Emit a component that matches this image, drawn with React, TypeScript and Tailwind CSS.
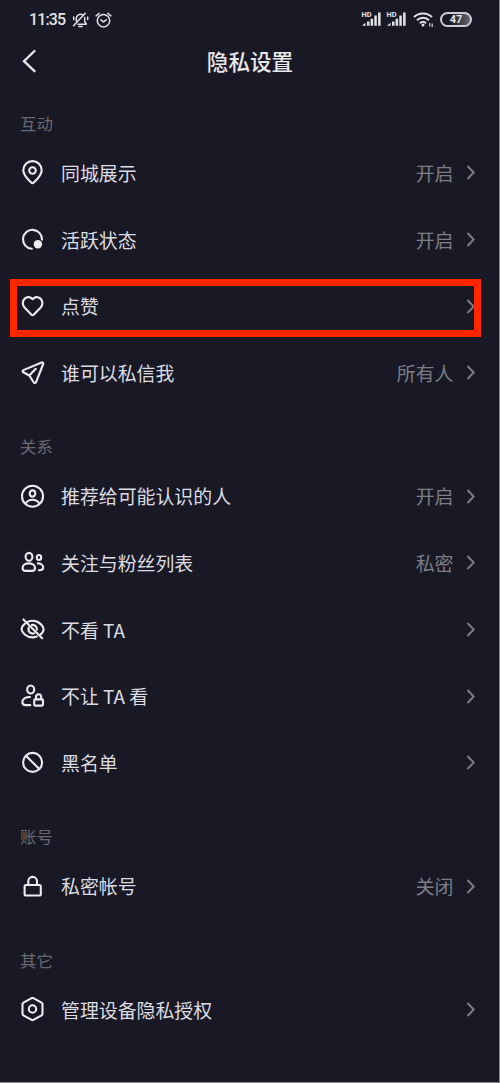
import React from 'react'

type IconName =
  | 'pin'
  | 'active'
  | 'heart'
  | 'send'
  | 'profile'
  | 'users'
  | 'eyeOff'
  | 'userLock'
  | 'ban'
  | 'lock'
  | 'hexagon'

interface IRow {
  icon: IconName
  label: string
  value?: string
  highlighted?: boolean
}

interface ISection {
  title: string
  rows: IRow[]
  divider?: boolean
}

const sections: ISection[] = [
  {
    title: '互动',
    rows: [
      { icon: 'pin', label: '同城展示', value: '开启' },
      { icon: 'active', label: '活跃状态', value: '开启' },
      { icon: 'heart', label: '点赞', highlighted: true },
      { icon: 'send', label: '谁可以私信我', value: '所有人' },
    ],
  },
  {
    title: '关系',
    rows: [
      { icon: 'profile', label: '推荐给可能认识的人', value: '开启' },
      { icon: 'users', label: '关注与粉丝列表', value: '私密' },
      { icon: 'eyeOff', label: '不看 TA' },
      { icon: 'userLock', label: '不让 TA 看' },
      { icon: 'ban', label: '黑名单' },
    ],
  },
  {
    title: '账号',
    divider: true,
    rows: [{ icon: 'lock', label: '私密帐号', value: '关闭' }],
  },
  {
    title: '其它',
    divider: true,
    rows: [{ icon: 'hexagon', label: '管理设备隐私授权' }],
  },
]

const icons: Record<IconName, React.ReactNode> = {
  pin: (
    <>
      <path d="M13.5 24.2c-.5 0-.9-.2-1.3-.6C9 20.400 4.300 16.400 4.300 11.300a9.200 9.200 0 0 1 18.400 0c0 5.100-4.700 9.100-7.900 12.300-.4.4-.8.6-1.300.6z" />
      <circle cx="13.5" cy="11.5" r="3.3" />
    </>
  ),
  active: (
    <>
      <path d="M12.8 22.8a9.500 9.500 0 1 1 10.200-9.200" />
      <circle cx="18.9" cy="18.2" r="4.2" fill="currentColor" stroke="none" />
    </>
  ),
  heart: (
    <path d="M13.6 6.2C11.500 3.700 8.200 3.500 6 5.400c-2.900 2.500-2.900 6.600-.3 9.300l6.600 6.900c.8.800 1.800.8 2.600 0l6.600-6.900c2.600-2.700 2.600-6.800-.3-9.300-2.200-1.900-5.500-1.700-7.600.8z" />
  ),
  send: (
    <path d="M16.8 9.8l-6.500 6.700-6-3.200c-1-.6-.9-1.800.1-2.200L22.600 3.500c1.100-.4 2 .4 1.600 1.500l-7.100 18.100c-.5 1.200-1.900 1.200-2.500.1l-4.300-6.700" />
  ),
  profile: (
    <>
      <circle cx="13.5" cy="13.2" r="10.5" />
      <ellipse cx="13.5" cy="10.5" rx="2.8" ry="3.1" />
      <path d="M6.7 20.3c1.600-2.300 3.900-3.500 6.800-3.500s5.200 1.200 6.800 3.500" />
    </>
  ),
  users: (
    <>
      <ellipse cx="10" cy="7.8" rx="3.4" ry="3.9" />
      <path d="M3.6 18.9c0-2.900 2.800-4.500 6.200-4.500s6.200 1.600 6.200 4.500c0 2-1.200 3-3 3H6.600c-1.800 0-3-1-3-3z" />
      <ellipse cx="20" cy="8.5" rx="2.2" ry="2.5" />
      <path d="M18.8 14.4c3 0 5.400 1.600 5.400 4.100 0 1.800-1.300 2.700-3.600 2.700h-.8" />
    </>
  ),
  eyeOff: (
    <>
      <path d="M8.6 5.9c1.500-.7 3.200-1.100 5-1.100 6.300 0 11 5.300 11 8.400 0 1.600-1.200 3.700-3.300 5.400M17.800 20.600c-1.300.5-2.700.8-4.200.8-6.300 0-11-5.200-11-8.200 0-1.700 1.200-3.800 3.300-5.500" />
      <path d="M9.8 11.6a4.300 4.300 0 0 0 5.400 5.700M13 8.900a4.300 4.300 0 0 1 4.900 4.700" />
      <path d="M4.4 3.4l18.800 18.800" />
    </>
  ),
  userLock: (
    <>
      <ellipse cx="11.7" cy="6.5" rx="3.5" ry="4" />
      <path d="M11 14c-4.300 0-7.700 1.900-7.700 5 0 2 1.300 3.100 3.300 3.100h4.700" />
      <rect x="15.2" y="16.4" width="8.8" height="6.2" rx="1" />
      <path d="M17 16.2v-2.300a2.600 2.600 0 0 1 5.200 0v2.300" />
    </>
  ),
  ban: (
    <>
      <circle cx="13.6" cy="13.4" r="9.5" />
      <path d="M7 6.800l13.300 13.300" />
    </>
  ),
  lock: (
    <>
      <rect x="5.6" y="12" width="16.2" height="10.5" rx="1.6" />
      <path d="M9.3 11.8V8.200a4.300 4.300 0 0 1 8.700 0v3.600" />
    </>
  ),
  hexagon: (
    <>
      <path d="M12.6 2.1c.6-.3 1.200-.3 1.800 0l8.200 4.600c.6.3.9.9.9 1.500v9.600c0 .6-.3 1.200-.9 1.500l-8.200 4.600c-.6.3-1.200.3-1.800 0l-8.200-4.600c-.6-.3-.9-.9-.9-1.500V8.200c0-.6.3-1.200.9-1.500z" />
      <circle cx="13.5" cy="13" r="3.7" />
    </>
  ),
}

const RowIcon: React.FC<{ name: IconName }> = ({ name }) => (
  <svg
    width="28"
    height="28"
    viewBox="0 0 28 28"
    fill="none"
    stroke="currentColor"
    strokeWidth="2.1"
    strokeLinecap="round"
    strokeLinejoin="round"
    className="shrink-0 text-[#ececf0]"
  >
    {icons[name]}
  </svg>
)

const Signal: React.FC = () => (
  <svg width="21" height="16" viewBox="0 0 21 16" fill="#e4e4e8" className="shrink-0">
    <text x="0.5" y="6" fontSize="7.4" fontWeight="700" fontFamily="Roboto, sans-serif">HD</text>
    <path d="M1 14.700l3.500-2.900v2.900zM6 10.600h2.500v4.100H6zM9.600 7.700h2.500v7H9.600zM13.300 4.600h2.500v10.100h-2.500zM17.100 1.500h2.500v13.200h-2.500z" />
  </svg>
)

const StatusBar: React.FC = () => (
  <div className="flex h-[38px] items-center justify-between pl-[29px] pr-[27px] text-[#e4e4e8]">
    <div className="flex items-center pt-px">
      <span className="w-[43px] font-[Roboto,sans-serif] text-[16px] font-medium leading-5 tracking-[-0.9px]">11:35</span>
      <svg width="17" height="16" viewBox="0 0 17 16" fill="none" stroke="currentColor" strokeWidth="1.5" strokeLinecap="round" strokeLinejoin="round">
        <path d="M4.3 9.2V6.600a4.200 4.200 0 0 1 6.300-3.700M12.700 5.500v4l1.600 2.700H6" />
        <path d="M1.5 13.800L13.300 1.200M6.800 14.500h3.400M1.700 5v2.600M15.700 5v2.600" />
      </svg>
      <svg width="17" height="16" viewBox="0 0 17 16" fill="none" stroke="currentColor" strokeWidth="1.5" strokeLinecap="round" className="ml-[6px]">
        <circle cx="8.5" cy="8.7" r="6.2" />
        <path d="M1.1 3.800l3-2.500M15.900 3.800l-3-2.500M5.900 7.900l2.600 2 2.800-2" />
      </svg>
    </div>
    <div className="flex items-center">
      <div className="flex gap-[4px]">
        <Signal />
        <Signal />
      </div>
      <svg width="22" height="17" viewBox="0 0 22 17" fill="none" stroke="currentColor" strokeWidth="2" className="ml-[6px] mr-[5px]">
        <path d="M1 6c5.100-4.700 12.900-4.700 18 0M4 9.200c3.400-3.200 8.600-3.200 12 0M6.900 12.200c1.800-1.600 4.400-1.600 6.200 0" />
        <circle cx="10" cy="14" r="1.5" fill="currentColor" stroke="none" />
        <path d="M16.8 12v3.500M19.200 12.500v3.500" strokeWidth="1.1" />
      </svg>
      <div className="flex h-[15px] w-[32px] items-center justify-center rounded-full border-2 border-[#cdcdd2] bg-gradient-to-r from-[#181924] from-30% to-[#686872] pt-px">
        <span className="font-[Roboto,sans-serif] text-[11px] font-bold leading-none">47</span>
      </div>
    </div>
  </div>
)

const SettingRow: React.FC<{ row: IRow }> = ({ row }) => (
  <div className="relative flex h-[66.67px] items-center pl-[19px] pr-[22.6px]">
    <RowIcon name={row.icon} />
    <span className="ml-[14px] flex-1 pb-[0.8px] text-[18.9px] leading-7 text-[#dcdce2]">{row.label}</span>
    {row.value && <span className="pb-[0.8px] text-[18.9px] leading-7 text-[#7d7d87]">{row.value}</span>}
    <svg width="10" height="16" viewBox="0 0 10 16" fill="none" stroke="#7b7b85" strokeWidth="2" className="ml-[13px] shrink-0">
      <path d="M1.5 1l6.200 6.500L1.500 14" />
    </svg>
    {row.highlighted && (
      <div className="absolute left-[10px] top-[6px] h-[58px] w-[471px] border-[7px] border-[#ff2600]" />
    )}
  </div>
)

const App: React.FC = () => {
  return (
    <div className="h-[1083px] w-[500px] overflow-hidden border-b border-r border-[#85868c] bg-[#181924] font-['Noto_Sans_CJK_SC',sans-serif]">
      <StatusBar />

      <header className="flex h-[45.5px] items-center pl-[20px] pr-[41px]">
        <svg width="18" height="24" viewBox="0 0 18 24" fill="none" stroke="#e4e4e8" strokeWidth="2.4" strokeLinecap="round">
          <path d="M14.5 2L4 12.200l10.500 10" />
        </svg>
        <h1 className="flex-1 pl-[4px] text-center text-[21.6px] font-medium leading-8 text-[#e8e8ec]">隐私设置</h1>
      </header>

      <main>
        {sections.map((section) => (
          <section key={section.title}>
            <div className="flex h-[56.67px] flex-col">
              {section.divider && <div className="ml-[20px] mr-[28px] mt-[5px] h-px bg-[#1c1f2c]" />}
              <h2 className="mt-auto pb-[5px] pl-[20px] text-[16.4px] leading-6 text-[#696973]">{section.title}</h2>
            </div>
            {section.rows.map((row) => (
              <SettingRow key={row.label} row={row} />
            ))}
          </section>
        ))}
      </main>
    </div>
  )
}

export default App
